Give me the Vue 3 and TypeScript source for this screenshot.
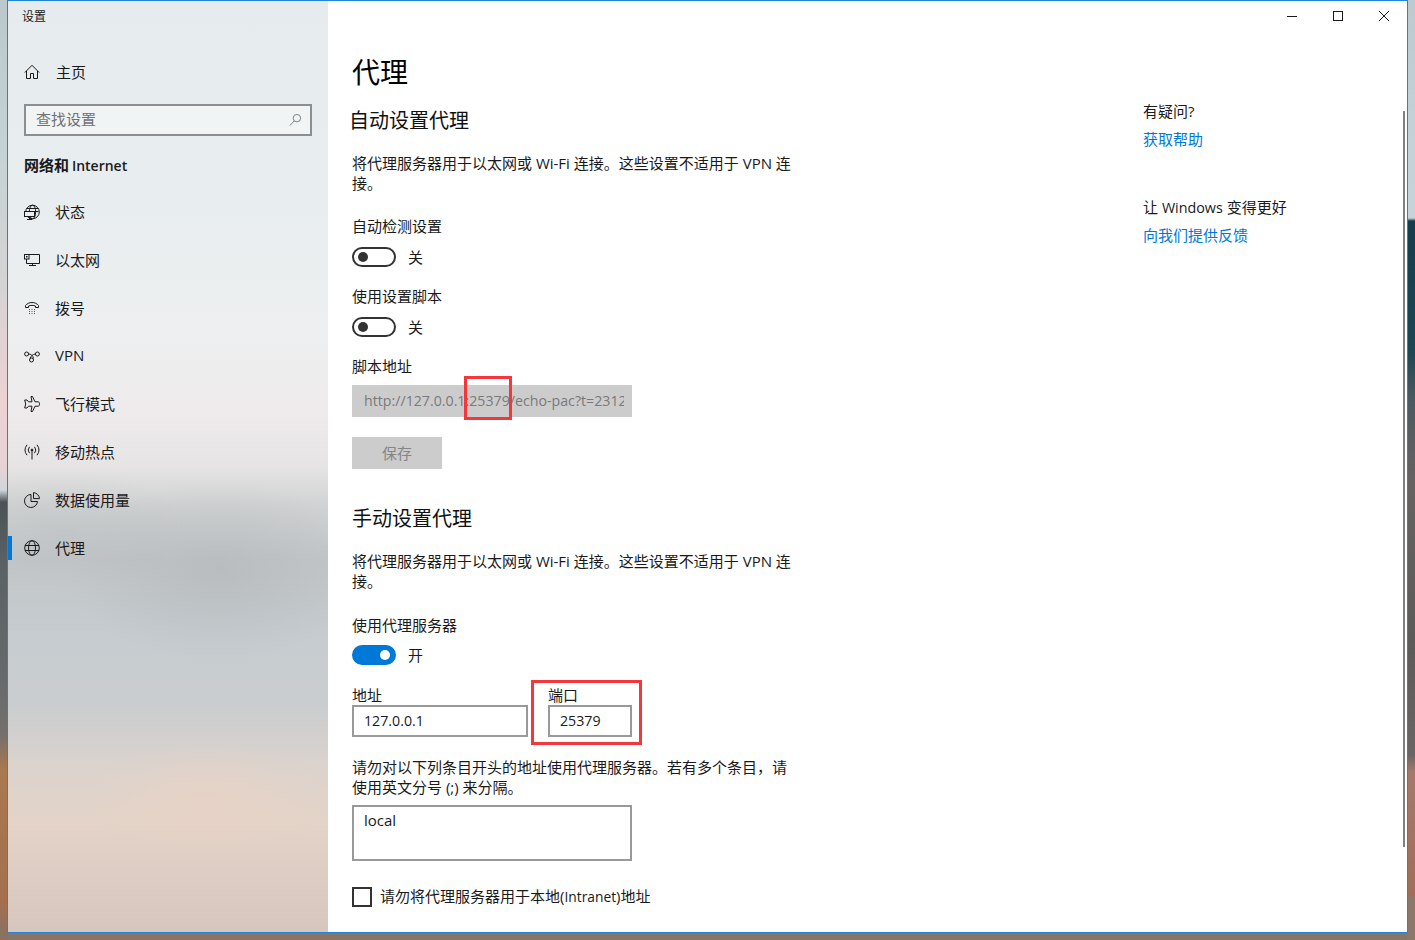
<script setup lang="ts">
interface NavItem { label: string; icon: string; active?: boolean }
const nav: NavItem[] = [
  { label: '状态', icon: 'status' },
  { label: '以太网', icon: 'ethernet' },
  { label: '拨号', icon: 'dial' },
  { label: 'VPN', icon: 'vpn' },
  { label: '飞行模式', icon: 'plane' },
  { label: '移动热点', icon: 'hotspot' },
  { label: '数据使用量', icon: 'data' },
  { label: '代理', icon: 'globe', active: true },
]
const desc = '将代理服务器用于以太网或 Wi-Fi 连接。这些设置不适用于 VPN 连接。'
</script>

<template>
  <div class="desktop">
    <div class="window">
      <aside class="sidebar">
        <div class="app-title">设置</div>
        <div class="home row">
          <svg class="icon" viewBox="0 0 16 16" fill="none" stroke="#1a1a1a"><path d="M.8 8.500 8 1.300l7.200 7.200M2.500 7v7.500h4v-5h3v5h4V7"/></svg>
          <span class="home-text">主页</span>
        </div>
        <div class="search">
          <span class="placeholder">查找设置</span>
          <svg class="search-icon" viewBox="0 0 14 14" fill="none" stroke="#77797a"><circle cx="8.500" cy="5" r="4"/><path d="M5.500 8 1 13"/></svg>
        </div>
        <div class="section">网络和 <span class="section-latin">Internet</span></div>
        <nav class="nav">
          <div v-for="item in nav" :key="item.label" class="row" :class="{ active: item.active }">
            <svg class="icon" viewBox="0 0 16 16" fill="none" stroke="#1a1a1a">
              <template v-if="item.icon === 'status'">
                <circle cx="8.500" cy="8" r="6.800"/>
                <ellipse cx="8.500" cy="8" rx="3.200" ry="6.800"/>
                <path d="M2.500 4.500h12M2.500 7.500h12"/>
                <rect x=".5" y="7.500" width="10" height="5" fill="#e9edef"/>
                <path d="M5.500 12.500v3M3 15.500h5"/>
              </template>
              <template v-else-if="item.icon === 'ethernet'">
                <path d="M3 2.500h12.500v9H2.500M8.500 11.500v2.500M5 13.500h7"/>
                <rect x=".5" y="2.500" width="4.500" height="4.500" fill="#e9edef"/>
                <rect x="2" y="4" width="1.500" height="1.500" fill="#1a1a1a" stroke="none"/>
                <path d="M2.500 7v4.500"/>
              </template>
              <template v-else-if="item.icon === 'dial'">
                <path d="M1.500 7.500V5.500C3 3.500 5.500 2.500 8 2.500s5 1 6.500 3v2h-3V6c-2-.8-5-.8-7 0v1.500z"/>
                <path d="M5 9.500h6M5 11.500h6M5 13.500h6" stroke="#555" stroke-dasharray="1 1.500"/>
              </template>
              <template v-else-if="item.icon === 'vpn'">
                <circle cx="2.600" cy="6" r="2"/><circle cx="13.400" cy="6" r="2"/><circle cx="7.500" cy="12" r="2"/>
                <path d="M4.600 6C7 6 9 7.500 9.500 10.500M11.400 6C9 6 7 8 6 10.500"/>
              </template>
              <template v-else-if="item.icon === 'plane'">
                <path d="M7 .5h1.500L11 5.800h3c1 0 1.700 1 1.700 2.200s-.7 2.200-1.700 2.200h-3L8.500 15.500H7L8 10.200H4.500L3 12H.7l1-4-1-4H3l1.500 1.800H8z"/>
              </template>
              <template v-else-if="item.icon === 'hotspot'">
                <circle cx="8" cy="6" r=".9" fill="#1a1a1a"/>
                <path d="M8 6v9.500M5.500 2.800a5 5 0 0 0 0 6.400M10.500 2.800a5 5 0 0 1 0 6.400M3 .8a8.500 8.500 0 0 0 0 10.400M13 .8a8.500 8.500 0 0 1 0 10.400"/>
              </template>
              <template v-else-if="item.icon === 'data'">
                <path d="M7 2.500a6.500 6.500 0 1 0 6.500 7H7zM9.500.6v6h6A6.500 6.500 0 0 0 9.500.6z"/>
              </template>
              <template v-else>
                <circle cx="8" cy="8" r="7.300"/>
                <ellipse cx="8" cy="8" rx="3.500" ry="7.300"/>
                <path d="M1 5.500h14M1 10.500h14"/>
              </template>
            </svg>
            <span>{{ item.label }}</span>
          </div>
        </nav>
      </aside>

      <main class="main">
        <div class="content">
          <h1 class="title">代理</h1>
          <h2 class="heading shift">自动设置代理</h2>
          <p class="para">{{ desc }}</p>
          <div class="label gap-24">自动检测设置</div>
          <div class="switch-row"><span class="switch"></span><span class="state">关</span></div>
          <div class="label gap-20">使用设置脚本</div>
          <div class="switch-row"><span class="switch"></span><span class="state">关</span></div>
          <div class="label gap-20">脚本地址</div>
          <div class="script-wrap">
            <div class="script-input"><span class="script-value">http://127.0.0.1:25379/echo-pac?t=2312</span></div>
            <div class="mark mark-script"></div>
          </div>
          <div class="save">保存</div>
          <h2 class="heading heading-manual">手动设置代理</h2>
          <p class="para">{{ desc }}</p>
          <div class="label gap-24 label-proxy">使用代理服务器</div>
          <div class="switch-row"><span class="switch on"></span><span class="state">开</span></div>
          <div class="fields">
            <div class="field addr">
              <div class="field-label">地址</div>
              <div class="box">127.0.0.1</div>
            </div>
            <div class="field port">
              <div class="field-label">端口</div>
              <div class="box">25379</div>
              <div class="mark mark-port"></div>
            </div>
          </div>
          <p class="para para-exclude">请勿对以下列条目开头的地址使用代理服务器。若有多个条目，请使用英文分号 (;) 来分隔。</p>
          <div class="area">local</div>
          <label class="check"><span class="checkbox"></span><span class="check-text">请勿将代理服务器用于本地(<span class="narrow-check">Intranet</span>)地址</span></label>
        </div>
        <div class="help">
          <div class="help-title">有疑问?</div>
          <a class="link">获取帮助</a>
          <div class="help-title second">让 <span class="narrow">Windows</span> 变得更好</div>
          <a class="link">向我们提供反馈</a>
        </div>
      </main>

      <div class="controls">
        <svg viewBox="0 0 10 10" stroke="#1a1a1a" fill="none"><path d="M0 5.500h10"/></svg>
        <svg viewBox="0 0 10 10" stroke="#1a1a1a" fill="none"><rect x=".5" y=".5" width="9" height="9"/></svg>
        <svg viewBox="0 0 10 10" stroke="#1a1a1a" fill="none"><path d="M0 0l10 10M10 0 0 10"/></svg>
      </div>
      <div class="scrollbar"></div>
    </div>
  </div>
</template>

<style>
html, body { margin: 0; overflow: hidden; }
</style>

<style scoped>
.desktop {
  width: 1415px;
  height: 940px;
  overflow: hidden;
  background:
    linear-gradient(#bcc9cc 0, #c5d3d6 150px, #d5d3d4 280px, #ecd2d3 400px, #e6d2d6 470px, #cfd6dc 490px, #4a5256 502px, #5a6164 560px, #666a6c 680px, #75706c 735px, #a8794f 770px, #a56f50 900px, #8c7161 932px) left top / 8px 100% no-repeat,
    linear-gradient(#bccad0 0, #c4d2d8 120px, #c6d4da 218px, #143e4e 221px, #1b4654 350px, #4c5a60 400px, #666262 480px, #5d5a5a 640px, #6a6565 755px, #a5796a 772px, #a06e58 895px, #8d7768 898px) right top / 8px 100% no-repeat,
    #8a7465;
  font-family: "Open Sans", "Noto Sans CJK SC", sans-serif;
  font-size: 15px;
  color: #1a1a1a;
}
.window {
  position: relative;
  box-sizing: border-box;
  margin-left: 7px;
  width: 1401px;
  height: 933px;
  border: 1px solid #1f86dc;
  display: flex;
  background: #fff;
}
.sidebar {
  width: 320px;
  flex: none;
  background:
    radial-gradient(ellipse 150px 90px at 210px 570px, rgba(165,170,171,.35), rgba(165,170,171,0)),
    radial-gradient(ellipse 120px 60px at 60px 530px, rgba(165,170,171,.2), rgba(165,170,171,0)),
    radial-gradient(ellipse 120px 60px at 200px 800px, rgba(235,210,195,.6), rgba(235,210,195,0)),
    linear-gradient(#e6ebee 0, #e8edef 200px, #edeff0 330px, #eeeaeb 420px, #e6e4e4 465px, #d0d2d3 505px, #c2c6c8 560px, #c6ccd0 640px, #c9cdcf 700px, #dcd3cd 770px, #e3d3c8 820px, #d6c6be 933px);
}
.app-title {
  padding: 7px 0 0 14px;
  height: 18px;
  line-height: 18px;
  font-size: 12px;
  margin-bottom: 22px;
}
.row {
  position: relative;
  height: 48px;
  display: flex;
  align-items: center;
  padding-left: 16px;
  gap: 15px;
  box-sizing: border-box;
}
.row > span { padding-bottom: 2px; }
.row.active::before {
  content: "";
  position: absolute;
  left: 0;
  top: 12px;
  width: 4px;
  height: 24px;
  background: #0078d7;
}
.home-text { margin-left: 1px; }
.icon { width: 16px; height: 16px; flex: none; }
.search {
  box-sizing: border-box;
  margin: 8px 0 0 16px;
  width: 288px;
  height: 32px;
  border: 2px solid #8b8f90;
  background: rgba(255,255,255,.42);
  display: flex;
  align-items: center;
  justify-content: space-between;
  padding: 0 8px 4px 10px;
}
.placeholder { color: #6f7173; }
.search-icon { width: 13px; height: 14px; margin-top: 4px; }
.section {
  margin: 17px 0 11px 16px;
  height: 24px;
  line-height: 24px;
  font-weight: 700;
  font-size: 15px;
  word-spacing: -1px;
}
.section-latin { font-size: 14px; font-weight: 600; }
.narrow { font-size: 14.300px; }
.narrow-check { font-size: 13.800px; }
.main { flex: 1; display: flex; min-width: 0; }
.content { width: 815px; padding-left: 24px; box-sizing: border-box; flex: none; }
.title {
  margin: 51px 0 0;
  font-size: 28px;
  font-weight: 400;
  line-height: 40px;
  color: #000;
}
.heading {
  margin: 0;
  font-size: 20px;
  font-weight: 400;
  line-height: 28px;
  color: #111;
}
.shift { margin: 15px 0 0 -3px; }
.heading-manual { margin-top: 36px; }
.para {
  margin: 18px 0 0;
  width: 444px;
  line-height: 20px;
}
.label { line-height: 18px; height: 20px; }
.label-proxy { line-height: 20px; }
.gap-24 { margin-top: 24px; }
.gap-20 { margin-top: 20px; }
.switch-row {
  height: 20px;
  margin-top: 10px;
  display: flex;
  align-items: center;
  gap: 12px;
}
.state { padding-bottom: 2px; }
.switch {
  position: relative;
  box-sizing: border-box;
  width: 44px;
  height: 20px;
  border: 2px solid #333;
  border-radius: 10px;
}
.switch::after {
  content: "";
  position: absolute;
  left: 4px;
  top: 3px;
  width: 10px;
  height: 10px;
  border-radius: 50%;
  background: #333;
}
.switch.on { background: #0078d7; border-color: #0078d7; }
.switch.on::after { left: auto; right: 4px; background: #fff; }
.script-wrap { position: relative; margin-top: 8px; width: 280px; }
.script-input {
  height: 32px;
  line-height: 32px;
  box-sizing: border-box;
  background: #ccc;
  color: #7a7a7a;
  padding: 0 8px 0 12px;
  font-size: 14.200px;
  white-space: nowrap;
}
.script-value { display: block; overflow: hidden; }
.mark { position: absolute; box-sizing: border-box; border: 3px solid #f4373a; }
.mark-script { left: 112px; top: -9px; width: 48px; height: 44px; }
.save {
  margin-top: 20px;
  width: 90px;
  height: 32px;
  line-height: 32px;
  text-align: center;
  background: #ccc;
  color: #858585;
}
.fields { display: flex; gap: 20px; margin-top: 20px; }
.field { position: relative; }
.addr { width: 176px; }
.port { width: 84px; }
.field-label { line-height: 20px; height: 20px; }
.box {
  box-sizing: border-box;
  height: 32px;
  line-height: 28px;
  border: 2px solid #999;
  padding-left: 10px;
  font-size: 14.200px;
  color: #1a1a1a;
}
.mark-port { left: -17px; top: -5px; width: 111px; height: 65px; }
.para-exclude { margin-top: 20px; }
.area {
  box-sizing: border-box;
  margin-top: 8px;
  width: 280px;
  height: 56px;
  border: 2px solid #999;
  padding: 3px 10px;
  line-height: 20px;
}
.check {
  margin-top: 26px;
  height: 20px;
  display: flex;
  align-items: center;
  gap: 8px;
}
.check-text { padding-bottom: 4px; }
.checkbox {
  box-sizing: border-box;
  width: 20px;
  height: 20px;
  border: 2px solid #333;
}
.help { padding-top: 100px; }
.help-title { line-height: 20px; height: 20px; }
.help-title.second { margin-top: 48px; }
.link { display: block; margin-top: 8px; line-height: 20px; height: 20px; color: #0078d7; }
.controls {
  position: absolute;
  top: 10px;
  right: 18px;
  display: flex;
  gap: 36px;
}
.controls svg { width: 10px; height: 10px; display: block; }
.scrollbar {
  position: absolute;
  right: 2px;
  top: 110px;
  width: 2px;
  height: 736px;
  background: #808080;
}
</style>
